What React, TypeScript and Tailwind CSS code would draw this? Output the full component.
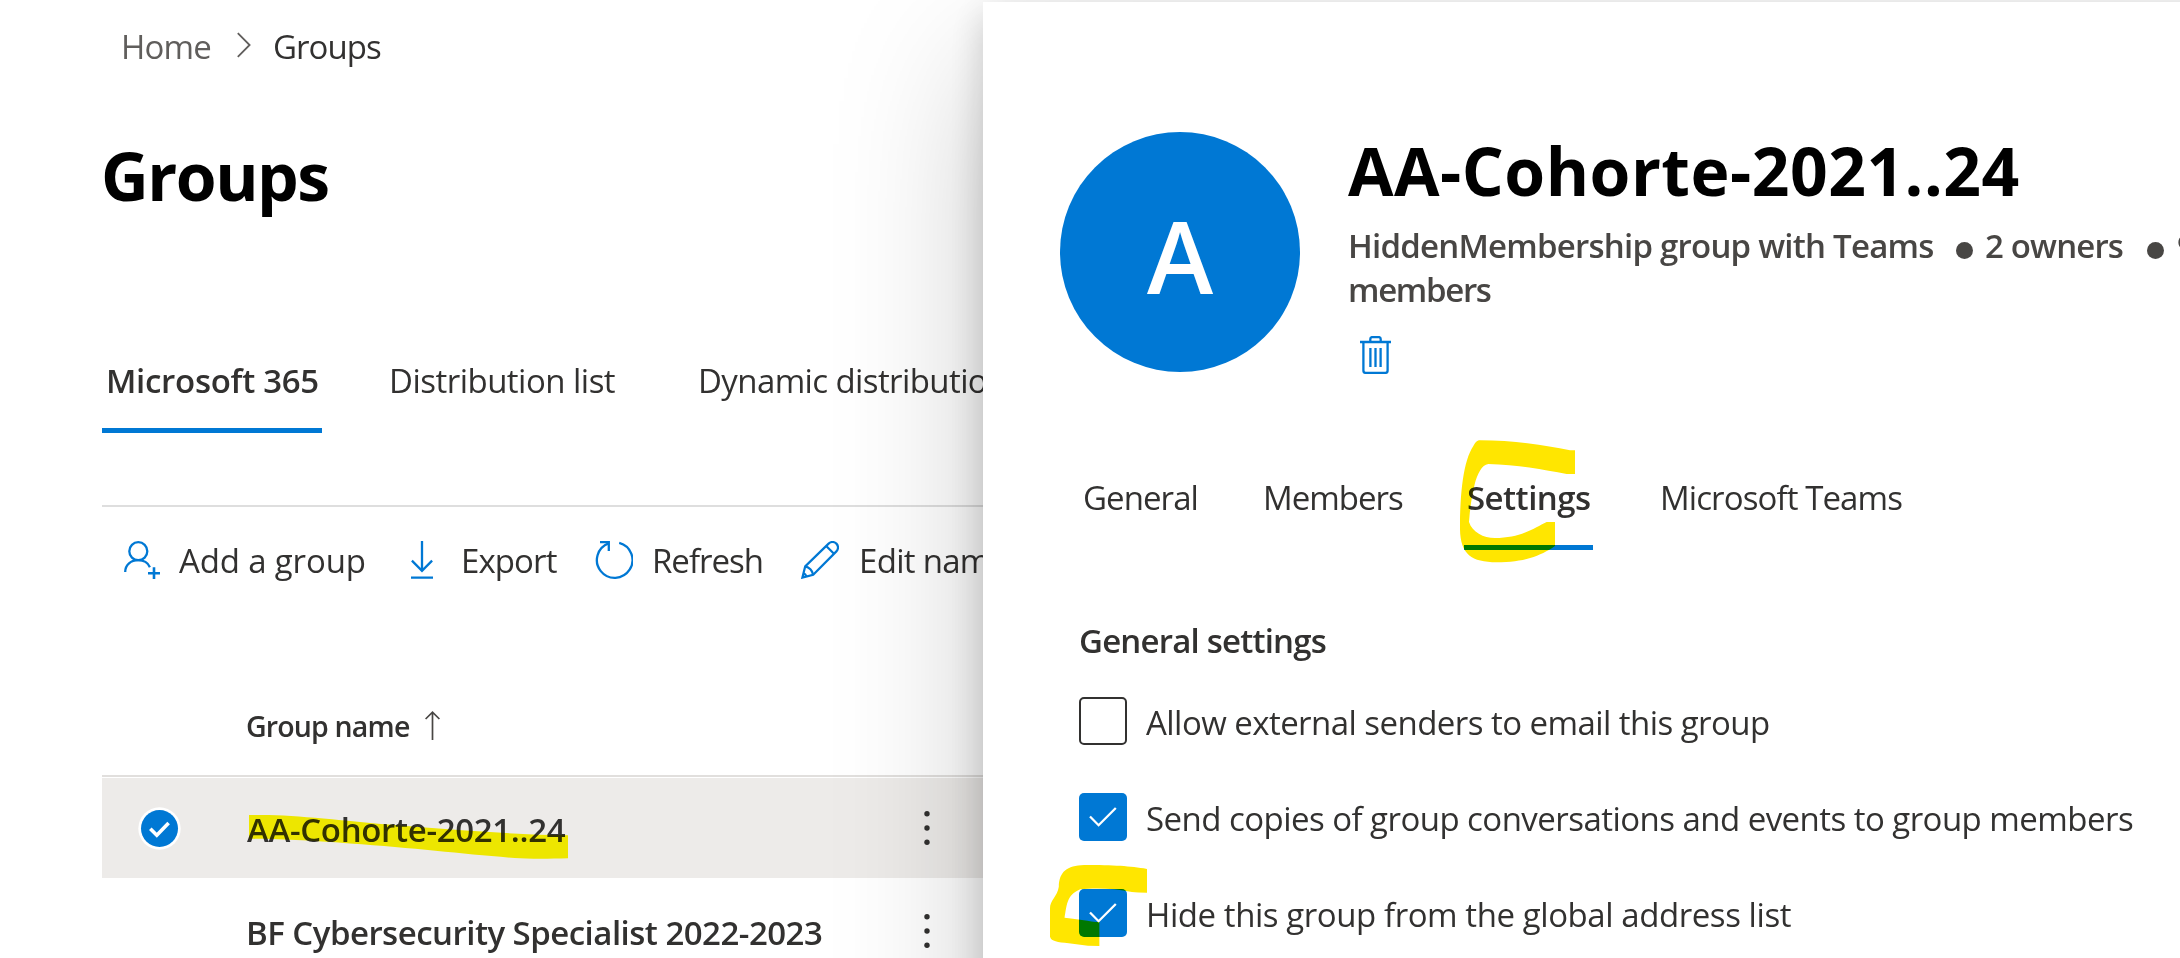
import type { ReactNode } from "react";

const BLUE = "#0078d4";

function Breadcrumb() {
  return (
    <nav className="flex h-[92px] items-center pl-[121px]">
      <span className="w-[116px] pt-[2px] tracking-[-0.8px] text-[#605e5c]">Home</span>
      <svg width="14" height="26" viewBox="0 0 14 26" fill="none" stroke="#605e5c" strokeWidth="1.8" className="-mt-0.5">
        <path d="M0.8 1.2 12.6 13 0.8 24.8" />
      </svg>
      <span className="ml-[22px] pt-[2px] tracking-[-0.94px]">Groups</span>
    </nav>
  );
}

function AddUserIcon() {
  return (
    <svg width="38" height="38" viewBox="0 0 38 38" fill="none" stroke={BLUE} strokeWidth="2.3">
      <circle cx="14.3" cy="10.2" r="9" />
      <path d="M1.2 31C1.2 23.6 7 19.2 14.3 19.2c5 0 9.6 2.6 11.6 7" />
      <path d="M24 32.2h12M30 26.2v12" strokeWidth="2.6" />
    </svg>
  );
}

function DownloadIcon() {
  return (
    <svg width="22" height="38" viewBox="0 0 22 38" fill="none" stroke={BLUE} strokeWidth="2.3">
      <path d="M11 0v30M0.9 19.6 11 29.8 21.1 19.6M0 36.6h22" />
    </svg>
  );
}

function RefreshIcon() {
  return (
    <svg width="38" height="38" viewBox="0 0 38 38" fill="none" stroke={BLUE} strokeWidth="2.3">
      <path d="M24.2 1.8A17.8 17.8 0 1 1 13.6 2.3" />
      <path d="M5 1.2h8.8v8.9" />
    </svg>
  );
}

function PencilIcon() {
  return (
    <svg width="38" height="38" viewBox="0 0 38 38" fill="none" stroke={BLUE} strokeWidth="2.2">
      <path d="M1.4 36.6 4.2 25.4 27.6 2.6a5.5 5.5 0 0 1 7.8 7.8L12.2 33.8Z" />
      <path d="M25.2 5 33 12.8M4.2 25.4q6.4 1.6 8 8.4M2.2 32.4q2.4.6 3.4 3.2" />
    </svg>
  );
}

function TrashIcon() {
  return (
    <svg width="31" height="38" viewBox="0 0 31 38" fill="none" stroke={BLUE} strokeWidth="2.3">
      <path d="M0 6h31M10.3 6V3q0-1.9 1.9-1.9h6.6q1.9 0 1.9 1.9v3" />
      <path d="M3.4 6v28.4q0 2.5 2.5 2.5h19.2q2.5 0 2.500-2.500V6" />
      <path d="M10.4 12v19M15.5 12v19M20.6 12v19" />
    </svg>
  );
}

function CheckCircle() {
  return (
    <svg width="43" height="43" viewBox="0 0 43 43">
      <circle cx="21.5" cy="21.5" r="21.2" fill="#fff" />
      <circle cx="21.5" cy="21.5" r="18.5" fill={BLUE} />
      <path d="M12.3 21.8 18.8 28.3 30.6 16" fill="none" stroke="#fff" strokeWidth="3.6" />
    </svg>
  );
}

function MoreDots() {
  return (
    <svg width="6" height="36" viewBox="0 0 6 36" fill="#323130">
      <circle cx="3" cy="3.7" r="2.7" />
      <circle cx="3" cy="18" r="2.7" />
      <circle cx="3" cy="32.3" r="2.7" />
    </svg>
  );
}

function GroupsPage() {
  return (
    <main className="h-[958px] w-[983px] shrink-0 overflow-hidden whitespace-nowrap">
      <Breadcrumb />
      <h1 className="flex h-[165px] items-center pl-[101px] text-[66px] font-bold tracking-[-1.5px] text-black">
        Groups
      </h1>

      <div className="mt-[74px] ml-[102px] flex h-[102px]">
        <div className="w-[220px] shrink-0 border-b-[5px] border-[#0078d4] pl-[4px] leading-[99px] font-semibold tracking-[-0.3px]">
          Microsoft 365
        </div>
        <div className="ml-[67px] w-[309px] shrink-0 leading-[99px] tracking-[-0.52px]">Distribution list</div>
        <div className="leading-[99px] tracking-[-0.6px]">Dynamic distribution list</div>
      </div>

      <div className="mt-[72px] ml-[102px] flex h-[108px] items-center border-t-2 border-[#dedede] pl-[22px]">
        <div className="flex w-[287px] shrink-0 items-center gap-[17px]">
          <AddUserIcon />
          <span className="pt-[2px] tracking-[-0.15px]">Add a group</span>
        </div>
        <div className="flex w-[184px] shrink-0 items-center gap-[28px]">
          <DownloadIcon />
          <span className="pt-[2px] tracking-[-0.9px]">Export</span>
        </div>
        <div className="flex w-[206px] shrink-0 items-center gap-[19px]">
          <RefreshIcon />
          <span className="pt-[2px] tracking-[-1px]">Refresh</span>
        </div>
        <div className="flex shrink-0 items-center gap-[20px]">
          <PencilIcon />
          <span className="pt-[2px] tracking-[-0.7px]">Edit name</span>
        </div>
      </div>

      <div className="mt-[62px] ml-[102px] flex h-[102px] items-center border-b-2 border-[#e1dfdd] pl-[144px] text-[28.5px] font-semibold">
        <span className="w-[179px] pt-px tracking-[-0.84px]">Group name</span>
        <svg width="15" height="29" viewBox="0 0 15 29" fill="none" stroke="#484644" strokeWidth="1.7">
          <path d="M7.5 29V1.2M0.6 8 7.5 1.2 14.4 8" />
        </svg>
      </div>

      <div className="mt-px ml-[102px] flex h-[100px] items-center bg-[#edebe9] pl-[36px] font-semibold">
        <CheckCircle />
        <div className="relative ml-[66px] w-[677px] shrink-0 pt-[4px] tracking-[-0.33px]">
          AA-Cohorte-2021..24
          <svg
            className="absolute top-[11px] left-[2px] mix-blend-darken"
            width="319"
            height="44"
            viewBox="282 405 532 131"
            preserveAspectRatio="none"
            fill="#ffe600"
          >
            <path d="M282 405H315C380 408 450 425 560 440 640 450 730 465 814 465V534C780 536 745 536 725 533 640 522 560 503 450 490 380 480 320 476 282 476Z" />
          </svg>
        </div>
        <MoreDots />
      </div>
      <div className="mt-[3px] ml-[102px] flex h-[100px] items-center pl-[144px] font-semibold">
        <div className="w-[678px] shrink-0 pt-[4px] tracking-[-0.52px]">BF Cybersecurity Specialist 2022-2023</div>
        <MoreDots />
      </div>
    </main>
  );
}

function Bullet() {
  return <span className="mt-[9px] inline-block size-[17px] shrink-0 rounded-full bg-[#484644]" />;
}

function Checkbox({ checked, children, mark }: { checked?: boolean; children: ReactNode; mark?: ReactNode }) {
  return (
    <label className="relative flex h-[48px] items-center gap-[19px]">
      {checked ? (
        <span className="flex size-[48px] items-center justify-center rounded-[5px] bg-[#0078d4]">
          <svg width="28" height="20" viewBox="0 0 28 20" fill="none" stroke="#fff" strokeWidth="2.3">
            <path d="M1 9.5 9.6 18.2 26.8 1" />
          </svg>
        </span>
      ) : (
        <span className="size-[48px] rounded-[5px] border-2 border-[#323130]" />
      )}
      <span className="pt-[3px]">{children}</span>
      {mark}
    </label>
  );
}

function GroupPanel() {
  return (
    <aside className="absolute top-[2px] left-[983px] h-[1300px] w-[1500px] bg-white pt-[130px] pl-[77px] whitespace-nowrap shadow-[0_61px_138px_rgba(0,0,0,0.22),0_11px_35px_rgba(0,0,0,0.18)]">
      <header className="flex h-[242px] gap-[48px]">
        <div className="flex size-[240px] items-center justify-center rounded-full bg-[#0078d4] pt-[6px] text-[100px] font-semibold text-white">
          A
        </div>
        <div className="text-[#484644]">
          <h2 className="pt-px text-[66px] leading-[74px] font-bold tracking-[0.49px] text-black">
            AA-Cohorte-2021..24
          </h2>
          <div className="mt-[17px] flex h-[44px] items-center font-semibold">
            <span className="w-[608px] shrink-0 tracking-[-0.77px]">HiddenMembership group with Teams</span>
            <Bullet />
            <span className="ml-[12px] w-[162px] shrink-0 tracking-[-0.84px]">2 owners</span>
            <Bullet />
            <span className="ml-[13px]">9</span>
          </div>
          <div className="leading-[43px] font-semibold tracking-[-1.33px]">members</div>
          <div className="mt-[25px] ml-[12px]">
            <TrashIcon />
          </div>
        </div>
      </header>

      <div className="relative mt-[75px] flex h-[101px] pl-[23px] leading-[98px]">
        <div className="w-[180px] tracking-[-0.93px]">General</div>
        <div className="w-[201px] tracking-[-1px]">Members</div>
        <div className="w-[129px] border-b-[5px] border-[#0078d4] pl-[3px] font-semibold tracking-[-0.53px]">Settings</div>
        <div className="ml-[67px] tracking-[-0.9px]">Microsoft Teams</div>
        <svg
          className="absolute top-[-9px] left-[400px] mix-blend-darken"
          width="116"
          height="123"
          viewBox="60 32 348 369"
          fill="#ffe600"
        >
          <path d="M120 33C220 33 310 47 390 63H405V134H380C310 121 230 106 145 104 125 106 112 135 104 165 94 205 90 240 87 278 97 309 130 326 165 326 240 326 280 298 320 278H345V350C300 381 250 399 170 399 95 399 61 375 60 300 60 190 70 95 100 50 107 37 112 33 120 33Z" />
        </svg>
      </div>

      <h3 className="mt-[69px] pl-[19px] leading-[44px] font-semibold tracking-[-0.8px]">General settings</h3>
      <div className="mt-[34px] flex flex-col gap-[48px] pl-[19px]">
        <Checkbox>
          <span className="tracking-[-0.55px]">Allow external senders to email this group</span>
        </Checkbox>
        <Checkbox checked>
          <span className="tracking-[-0.54px]">Send copies of group conversations and events to group members</span>
        </Checkbox>
        <Checkbox
          checked
          mark={
            <svg
              className="absolute top-[-24px] left-[-29.5px] mix-blend-darken"
              width="97.6"
              height="81"
              viewBox="51 585 255 243"
              preserveAspectRatio="none"
              fill="#ffe600"
            >
              <path d="M306 597C260 588 220 585 140 585 95 587 75 605 74 650 70 680 51 690 51 715V800C55 815 70 815 100 820L150 827 180 828V756H170C140 750 120 747 89 743 95 710 93 675 130 658 170 653 220 655 265 666Q280 668 306 668Z" />
            </svg>
          }
        >
          <span className="tracking-[-0.43px]">Hide this group from the global address list</span>
        </Checkbox>
      </div>
    </aside>
  );
}

export default function App() {
  return (
    <div className="relative h-[958px] w-[2180px] overflow-hidden bg-white font-['Open_Sans','Noto_Sans',sans-serif] text-[33px] leading-[44px] text-[#323130]">
      <GroupsPage />
      <GroupPanel />
    </div>
  );
}
